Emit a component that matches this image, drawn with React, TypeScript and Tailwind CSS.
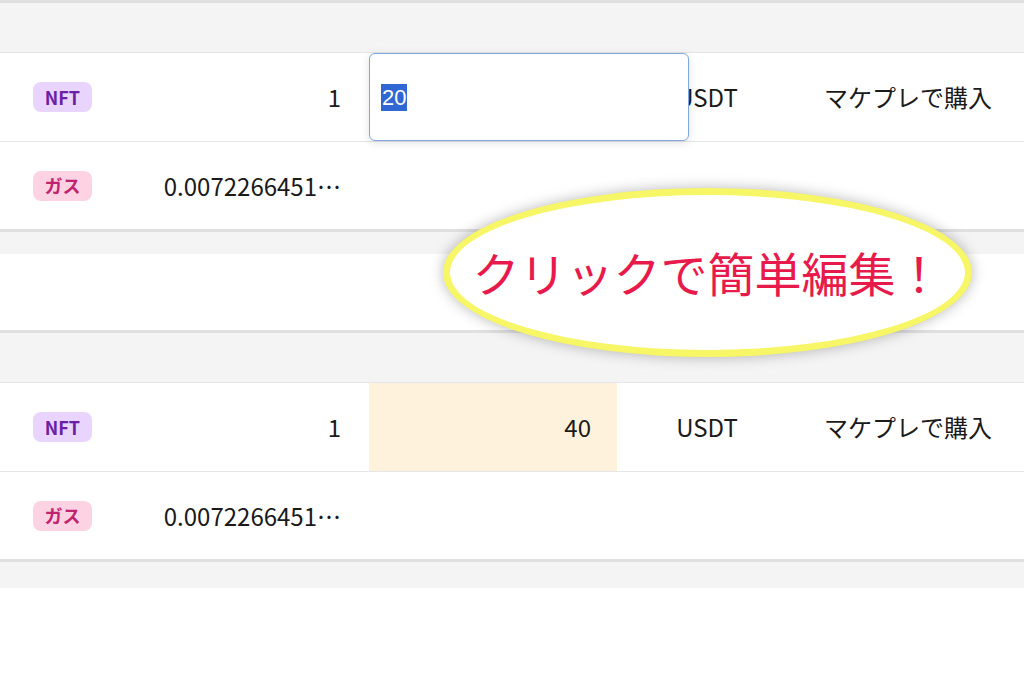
import React from 'react';

type Row = {
  kind: 'nft' | 'gas';
  amount: string;
  price?: string;
  editing?: boolean;
  highlight?: boolean;
  currency?: string;
  note?: string;
};

function Badge({ kind }: { kind: Row['kind'] }) {
  if (kind === 'nft') {
    return (
      <span className="inline-flex items-center justify-center w-[59px] h-[30px] rounded-[8px] bg-[#e8d4fd] text-[#6b1fa3] text-[18px] font-bold">
        NFT
      </span>
    );
  }
  return (
    <span className="inline-flex items-center justify-center w-[59px] h-[30px] rounded-[8px] bg-[#fdd3e4] text-[#c0246f] text-[18px] font-bold">
      ガス
    </span>
  );
}

function TableRow({ row, last }: { row: Row; last?: boolean }) {
  return (
    <div
      className={
        'grid grid-cols-[140px_229px_248px_180px_1fr] items-stretch bg-white ' +
        (last ? 'h-[87px]' : 'h-[89px] border-b border-[#e6e6e6]')
      }
    >
      <div className="flex items-center pl-[33px]">
        <Badge kind={row.kind} />
      </div>
      <div className="flex items-center justify-end pr-[28px] text-[24px] text-[#1a1a1a] whitespace-nowrap">
        {row.amount}
      </div>
      <div
        className={
          'relative flex items-center justify-end pr-[26px] text-[24px] text-[#1a1a1a] ' +
          (row.highlight ? 'bg-[#fff2dc]' : '')
        }
      >
        {row.editing ? (
          <div className="absolute left-0 top-0 z-10 flex h-[88px] w-[320px] items-center rounded-[6px] border border-[#7fa8e0] bg-white pl-[11px] shadow-[0_2px_8px_rgba(0,0,0,0.12)]">
            <span className="bg-[#3167d3] px-px text-[22px] leading-[27px] text-white font-['Liberation_Sans',Arial,sans-serif]">
              20
            </span>
          </div>
        ) : (
          row.price
        )}
      </div>
      <div className="flex items-center justify-center text-[24px] text-[#1a1a1a]">
        {row.currency}
      </div>
      <div className="flex items-center pl-[27px] text-[24px] text-[#1a1a1a] whitespace-nowrap">
        {row.note}
      </div>
    </div>
  );
}

function Block({ rows }: { rows: Row[] }) {
  return (
    <div className="border-y-[3px] border-[#e0e0e0]">
      <div className="h-[50px] bg-[#f4f4f4] border-b border-[#e6e6e6]" />
      {rows.map((r, i) => (
        <TableRow key={i} row={r} last={i === rows.length - 1} />
      ))}
    </div>
  );
}

export default function App() {
  const editingRows: Row[] = [
    { kind: 'nft', amount: '1', editing: true, currency: 'USDT', note: 'マケプレで購入' },
    { kind: 'gas', amount: '0.0072266451…' },
  ];
  const savedRows: Row[] = [
    { kind: 'nft', amount: '1', price: '40', highlight: true, currency: 'USDT', note: 'マケプレで購入' },
    { kind: 'gas', amount: '0.0072266451…' },
  ];

  return (
    <div className="relative h-[683px] w-[1024px] overflow-hidden bg-white font-['Noto_Sans_CJK_JP','Noto_Sans',sans-serif]">
      <Block rows={editingRows} />
      <div className="h-[22px] bg-[#f4f4f4]" />
      <div className="h-[76px] bg-white" />
      <Block rows={savedRows} />
      <div className="h-[26px] bg-[#f4f4f4]" />

      {/* callout */}
      <div className="absolute left-[443px] top-[188px] z-20 flex h-[169px] w-[529px] items-center justify-center rounded-[50%] border-[7px] border-[#f6f666] bg-white shadow-[0_0_14px_rgba(0,0,0,0.28)]">
        <span className="-mt-[2px] text-[47px] leading-none text-[#e81a4b] whitespace-nowrap">
          クリックで簡単編集！
        </span>
      </div>
    </div>
  );
}
